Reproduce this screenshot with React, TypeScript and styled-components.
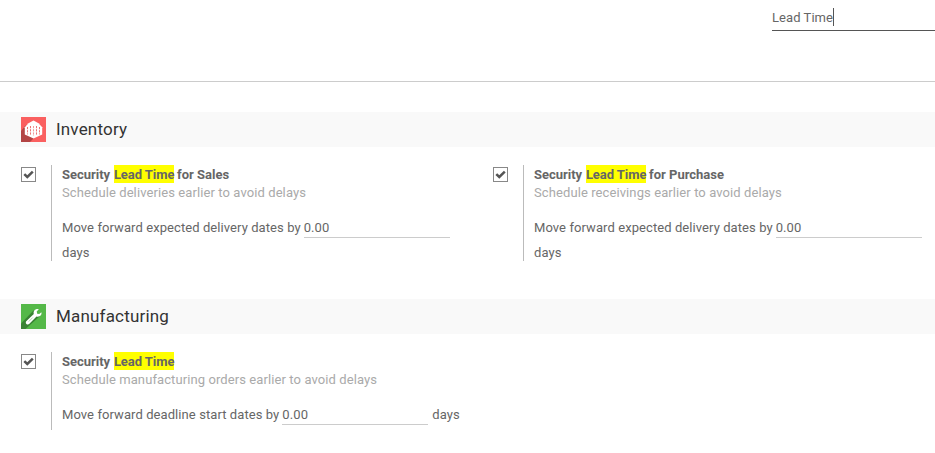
import React from 'react';
import styled, { createGlobalStyle } from 'styled-components';

const GlobalStyle = createGlobalStyle`
  *, *::before, *::after { box-sizing: border-box; }
  body {
    margin: 0;
    background: #fff;
    color: #666;
    font-family: Roboto, "Liberation Sans", sans-serif;
    font-size: 13px;
    line-height: 18px;
    overflow: hidden;
  }
`;

const Page = styled.main`
  width: 935px;
  height: 453px;
  overflow: hidden;
`;

const ControlPanel = styled.header`
  display: flex;
  justify-content: flex-end;
  align-items: flex-start;
  height: 82px;
  margin-bottom: 30px;
  border-bottom: 1px solid #ccc;
`;

const SearchField = styled.div`
  display: flex;
  align-items: flex-start;
  width: 163px;
  height: 31px;
  padding-top: 8px;
  border-bottom: 1px solid #555;
  letter-spacing: 0.06px;
  line-height: 20px;
`;

const Caret = styled.span`
  width: 1px;
  height: 18px;
  background: #555;
`;

const SectionTitle = styled.h2`
  display: flex;
  align-items: center;
  gap: 10px;
  height: 35px;
  margin: 0 0 18px;
  padding-left: 21px;
  background: #f9f9f9;
  color: #333;
  font-size: 17px;
  font-weight: 400;
  letter-spacing: 0.18px;
  line-height: 35px;
`;

const AppIcon = styled.svg`
  display: block;
  width: 25px;
  height: 25px;
`;

const Settings = styled.div<{ $gap?: number }>`
  display: grid;
  grid-template-columns: 472px 463px;
  margin-bottom: ${({ $gap = 0 }) => $gap}px;
`;

const Setting = styled.section`
  display: flex;
  align-items: stretch;
  padding-left: 21px;
`;

const Checkbox = styled.span`
  display: flex;
  flex: none;
  width: 15px;
  height: 15px;
  margin: 2px 15px 0 0;
  border: 1px solid #888;
`;

const SettingBody = styled.div`
  width: 415px;
  min-height: 78px;
  padding-left: 10px;
  border-left: 1px solid #bbb;
`;

const Label = styled.div`
  height: 18px;
  font-weight: 700;
  letter-spacing: -0.01px;
  line-height: 20px;
  white-space: nowrap;
`;

const Highlight = styled.span`
  display: inline-block;
  width: 60px;
  height: 18px;
  margin: 0 0 0 0.5px;
  background: #ff0;
  letter-spacing: -0.05px;
  vertical-align: top;
`;

const Description = styled.div`
  height: 18px;
  color: #aaa;
  letter-spacing: 0.095px;
  line-height: 20px;
  white-space: nowrap;
`;

const FieldLine = styled.div`
  display: flex;
  flex-wrap: wrap;
  column-gap: 4px;
  margin: 14px 0 -4px;
  letter-spacing: 0.08px;
  line-height: 25px;
`;

const FieldLabel = styled.span`
  white-space: nowrap;
  margin-right: -1px;
`;

const FieldValue = styled.span`
  width: 146px;
  height: 23px;
  border-bottom: 1px solid #ccc;
`;

const InventoryIcon = () => (
  <AppIcon viewBox="0 0 25 25">
    <path fill="#fa6060" d="M0 0h25v25H0z" />
    <path fill="#b34444" d="M4.5 8.5 0 14v11h9l5-5z" />
    <path fill="#fff" d="m12.5 3.6 5 2.6 3.7 4v7.3l-8.7 3.9-8.7-3.9v-7.3l3.7-4z" />
    <path
      fill="none"
      stroke="#ec7474"
      strokeWidth="1"
      strokeDasharray="2.2 1"
      d="M6.5 10v7.4M9.5 9v9.6M15.5 9v9.6M18.5 10v7.4"
    />
    <path
      fill="none"
      stroke="#f09090"
      strokeWidth=".9"
      strokeDasharray="2.2 1"
      d="M12.5 9v10"
    />
  </AppIcon>
);

const WrenchIcon = () => (
  <AppIcon viewBox="0 0 25 25">
    <path fill="#54b848" d="M0 0h25v25H0z" />
    <path fill="#398333" d="M12.5 6.5 0 19.5V25h4.5L19 12z" />
    <path
      fill="#fff"
      d="M17.8 5.2c-3.2-.9-5.9 1.6-5 4.7l-7.3 7c-2 2.1.8 4.9 2.9 2.9l7.1-7.3c3 .9 5.6-1.3 4.9-4.2l-2.2 1.8-2-.4-.5-2.2z"
    />
    <path stroke="#a5cfa0" strokeWidth=".9" strokeLinecap="round" d="m8 17.3 3.5-3.5" />
  </AppIcon>
);

const CheckMark = () => (
  <Checkbox role="checkbox" aria-checked="true">
    <svg width="13" height="13" viewBox="0 0 13 13">
      <path fill="none" stroke="#555" strokeWidth="2.5" d="m2.3 6.1 3 2.9 5.5-5.3" />
    </svg>
  </Checkbox>
);

interface LeadTimeSettingProps {
  suffix?: string;
  description: string;
  field: string;
}

const LeadTimeSetting = ({ suffix, description, field }: LeadTimeSettingProps) => (
  <Setting>
    <CheckMark />
    <SettingBody>
      <Label>
        Security <Highlight>Lead Time</Highlight>
        {suffix && ` ${suffix}`}
      </Label>
      <Description>{description}</Description>
      <FieldLine>
        <FieldLabel>{field}</FieldLabel>
        <FieldValue>0.00</FieldValue>
        <span>days</span>
      </FieldLine>
    </SettingBody>
  </Setting>
);

export default function App() {
  return (
    <Page>
      <GlobalStyle />
      <ControlPanel>
        <SearchField>
          <span>Lead Time</span>
          <Caret />
        </SearchField>
      </ControlPanel>
      <SectionTitle>
        <InventoryIcon />
        Inventory
      </SectionTitle>
      <Settings $gap={38}>
        <LeadTimeSetting
          suffix="for Sales"
          description="Schedule deliveries earlier to avoid delays"
          field="Move forward expected delivery dates by"
        />
        <LeadTimeSetting
          suffix="for Purchase"
          description="Schedule receivings earlier to avoid delays"
          field="Move forward expected delivery dates by"
        />
      </Settings>
      <SectionTitle>
        <WrenchIcon />
        Manufacturing
      </SectionTitle>
      <Settings>
        <LeadTimeSetting
          description="Schedule manufacturing orders earlier to avoid delays"
          field="Move forward deadline start dates by"
        />
      </Settings>
    </Page>
  );
}
